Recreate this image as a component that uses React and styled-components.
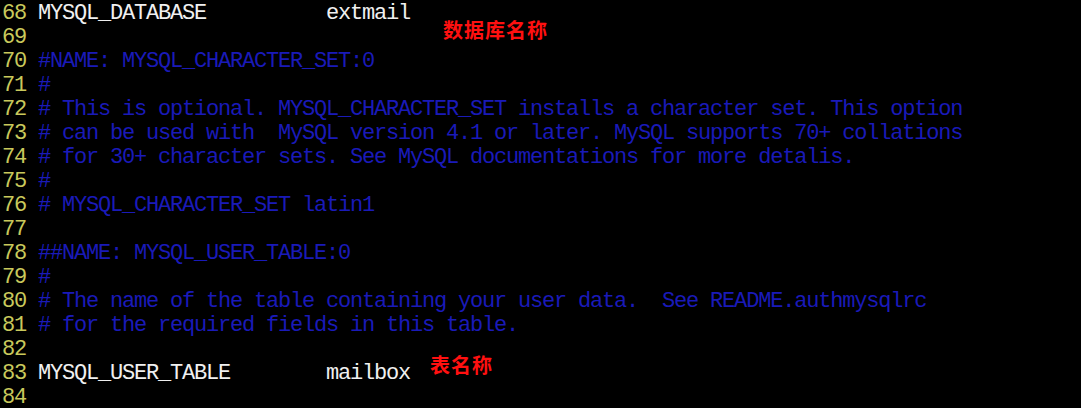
import React from "react";
import styled, { createGlobalStyle } from "styled-components";

const Global = createGlobalStyle`
  html, body { margin: 0; padding: 0; background: #000; }
  body { overflow: hidden; }
`;

const Screen = styled.div`
  position: relative;
  width: 1081px;
  height: 408px;
  box-sizing: border-box;
  padding: 2px 0 0 2px;
  background: #000;
  overflow: hidden;
  font-family: "Liberation Mono", "Noto Sans CJK SC", monospace;
  font-size: 22px;
  letter-spacing: -1.2px;
`;

const Line = styled.div`
  display: flex;
  height: 24px;
  line-height: 24px;
  white-space: pre;
`;

const Num = styled.span`
  width: 24px;
  margin-right: 12px;
  text-align: right;
  color: #c9c95c;
`;

const Code = styled.span`
  color: ${(p) => (p.$kind === "comment" ? "#1a1ab8" : "#f0f0f0")};
`;

const Note = styled.div`
  position: absolute;
  left: ${(p) => p.$x}px;
  top: ${(p) => p.$y}px;
  color: #ff1010;
  font-family: "Noto Sans CJK SC", sans-serif;
  font-weight: 700;
  font-size: 20px;
  line-height: 20px;
  letter-spacing: 1px;
`;

const lines = [
  [68, "MYSQL_DATABASE          extmail", "code"],
  [69, "", "code"],
  [70, "#NAME: MYSQL_CHARACTER_SET:0", "comment"],
  [71, "#", "comment"],
  [72, "# This is optional. MYSQL_CHARACTER_SET installs a character set. This option", "comment"],
  [73, "# can be used with  MySQL version 4.1 or later. MySQL supports 70+ collations", "comment"],
  [74, "# for 30+ character sets. See MySQL documentations for more detalis.", "comment"],
  [75, "#", "comment"],
  [76, "# MYSQL_CHARACTER_SET latin1", "comment"],
  [77, "", "code"],
  [78, "##NAME: MYSQL_USER_TABLE:0", "comment"],
  [79, "#", "comment"],
  [80, "# The name of the table containing your user data.  See README.authmysqlrc", "comment"],
  [81, "# for the required fields in this table.", "comment"],
  [82, "", "code"],
  [83, "MYSQL_USER_TABLE        mailbox", "code"],
  [84, "", "code"],
];

export default function App() {
  return (
    <>
      <Global />
      <Screen>
        {lines.map(([n, text, kind]) => (
          <Line key={n}>
            <Num>{n}</Num>
            <Code $kind={kind}>{text}</Code>
          </Line>
        ))}
        <Note $x={443} $y={20}>数据库名称</Note>
        <Note $x={430} $y={355}>表名称</Note>
      </Screen>
    </>
  );
}
